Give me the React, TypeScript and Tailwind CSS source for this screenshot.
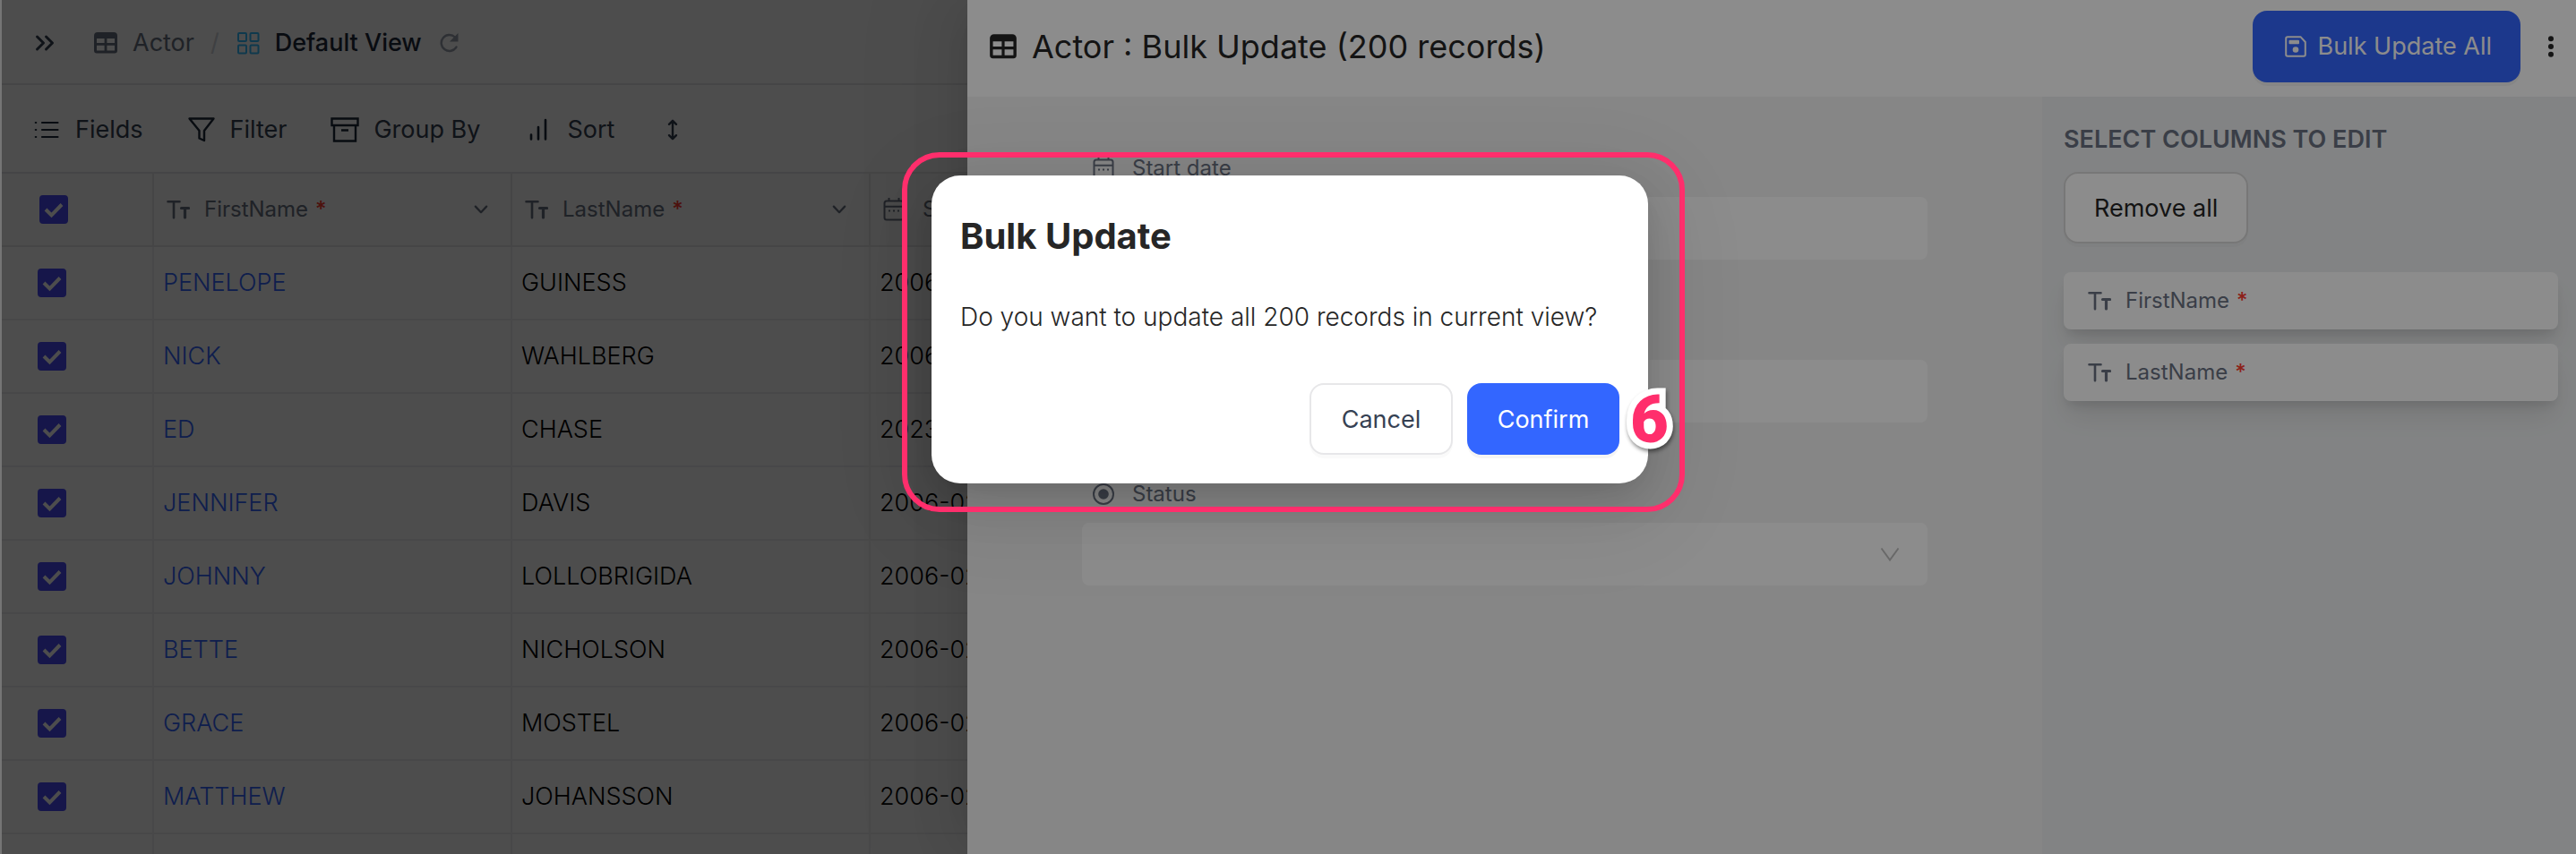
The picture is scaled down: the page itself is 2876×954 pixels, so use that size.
import type { ReactNode } from 'react';

type IconProps = { className?: string };

function TableIcon({ className }: IconProps) {
  return (
    <svg viewBox="0 0 28 28" className={className} fill="currentColor" aria-hidden="true">
      <path
        fillRule="evenodd"
        d="M5 2h18a4 4 0 0 1 4 4v16.500a3 3 0 0 1-3 3H4a3 3 0 0 1-3-3V6a4 4 0 0 1 4-4ZM4 9v5h8.600V9ZM15.400 9v5H24V9ZM4 16.800v5.700h8.600v-5.700ZM15.400 16.800v5.700H24v-5.700Z"
      />
    </svg>
  );
}

function TextTypeIcon({ className }: IconProps) {
  return (
    <svg viewBox="0 0 26 22" className={className} fill="none" stroke="currentColor" strokeLinecap="round" aria-hidden="true">
      <path d="M1.500 2.200H14.500M8 2.200V20.300" strokeWidth="2.600" />
      <path d="M16.500 9.500H24.500M20.500 9.500V20" strokeWidth="3.200" />
    </svg>
  );
}

function CalendarIcon({ className }: IconProps) {
  return (
    <svg viewBox="0 0 24 26" className={className} fill="none" stroke="currentColor" strokeWidth="2" aria-hidden="true">
      <rect x="1.500" y="3.500" width="21" height="21" rx="2.500" />
      <path d="M1.500 9.800h21M6.500 0v4M17.500 0v4" />
      <path d="M6 14.500h2M11 14.500h2M16 14.500h2" strokeWidth="2.200" />
    </svg>
  );
}

function ChevronIcon({ className }: IconProps) {
  return (
    <svg viewBox="0 0 16 16" className={className} fill="none" stroke="currentColor" strokeWidth="2" strokeLinecap="round" strokeLinejoin="round" aria-hidden="true">
      <path d="M2.500 5 8 10.800 13.500 5" />
    </svg>
  );
}

function Checkbox({ label }: { label: string }) {
  return (
    <label className="grid size-8 place-items-center">
      <input
        type="checkbox"
        defaultChecked
        aria-label={label}
        className="col-start-1 row-start-1 size-8 appearance-none rounded border-2 border-gray-300 checked:border-[#4b4bf8] checked:bg-[#4b4bf8]"
      />
      <svg viewBox="0 0 32 32" className="pointer-events-none col-start-1 row-start-1 size-8" fill="none" stroke="#ffffff" strokeWidth="4" aria-hidden="true">
        <path d="M7 16 13.500 22.500 25 10.500" />
      </svg>
    </label>
  );
}

function ToolButton({ icon, children }: { icon: ReactNode; children: ReactNode }) {
  return (
    <button type="button" className="flex items-center gap-4 whitespace-nowrap text-[27px] leading-9 text-gray-700">
      <span className="grid w-8 place-items-center text-gray-800">{icon}</span>
      {children}
    </button>
  );
}

function ColumnHeader({ name }: { name: string }) {
  return (
    <div className="flex items-center pr-6 pl-[14px]">
      <TextTypeIcon className="h-[22px] w-[26px]" />
      <span className="pl-4">{name}</span>
      <span className="pl-2 font-medium text-[#ff3b30]">*</span>
      <ChevronIcon className="ml-auto size-[18px]" />
    </div>
  );
}

const actors = [
  { first: 'PENELOPE', last: 'GUINESS', start: '2006-02-15' },
  { first: 'NICK', last: 'WAHLBERG', start: '2006-02-15' },
  { first: 'ED', last: 'CHASE', start: '2023-02-15' },
  { first: 'JENNIFER', last: 'DAVIS', start: '2006-02-15' },
  { first: 'JOHNNY', last: 'LOLLOBRIGIDA', start: '2006-02-15' },
  { first: 'BETTE', last: 'NICHOLSON', start: '2006-02-15' },
  { first: 'GRACE', last: 'MOSTEL', start: '2006-02-15' },
  { first: 'MATTHEW', last: 'JOHANSSON', start: '2006-02-15' },
];

function TopBar() {
  return (
    <header className="flex h-[95px] items-center border-b-2 border-[#e7e7e9] pt-[2px] pl-[34px] text-[27px] leading-9">
      <button type="button" aria-label="Expand sidebar" className="text-gray-700">
        <svg viewBox="0 0 28 28" className="size-7" fill="none" stroke="currentColor" strokeWidth="3" strokeLinecap="round" strokeLinejoin="round" aria-hidden="true">
          <path d="M5.500 7 12.500 14 5.500 21M15.500 7 22.500 14 15.500 21" />
        </svg>
      </button>
      <nav aria-label="Breadcrumb" className="flex items-center pl-10">
        <TableIcon className="size-7 text-gray-500" />
        <a href="#actor" className="pl-4 text-gray-500">Actor</a>
        <span className="px-[18px] text-gray-300">/</span>
        <svg viewBox="0 0 28 28" className="size-7" fill="none" stroke="#36bfff" strokeWidth="2" aria-hidden="true">
          <rect x="3" y="3" width="9" height="9" rx="1" />
          <rect x="16.500" y="3" width="9" height="9" rx="1" />
          <rect x="3" y="16.500" width="9" height="9" rx="1" />
          <rect x="16.500" y="16.500" width="9" height="9" rx="1" />
        </svg>
        <span className="pl-4 font-medium text-gray-800">Default View</span>
      </nav>
      <button type="button" aria-label="Reload" className="pl-4 text-gray-400">
        <svg viewBox="0 0 28 28" className="size-7" aria-hidden="true">
          <path d="M22.500 18.500A9 9 0 1 1 21 7.500" fill="none" stroke="currentColor" strokeWidth="2.400" strokeLinecap="round" />
          <path d="M24.500 3v9.500H15Z" fill="currentColor" />
        </svg>
      </button>
    </header>
  );
}

function Toolbar() {
  return (
    <div className="flex h-[99px] items-center gap-[49px] border-b-2 border-[#e7e7e9] pt-[2px] pl-[34px]">
      <ToolButton
        icon={
          <svg viewBox="0 0 28 24" className="h-6 w-7" fill="none" stroke="currentColor" strokeWidth="2.200" strokeLinecap="round" aria-hidden="true">
            <path d="M9 4h17.500M9 12h17.500M9 20h17.500M1.800 4h.4M1.800 12h.4M1.800 20h.4" />
          </svg>
        }
      >
        Fields
      </ToolButton>
      <ToolButton
        icon={
          <svg viewBox="0 0 32 32" className="size-8" fill="none" stroke="currentColor" strokeWidth="2.400" strokeLinejoin="round" aria-hidden="true">
            <path d="M2.500 3.500h27L19 17v11l-5.500-2.500V17Z" />
          </svg>
        }
      >
        Filter
      </ToolButton>
      <ToolButton
        icon={
          <svg viewBox="0 0 32 32" className="size-8" fill="none" stroke="currentColor" strokeWidth="2.400" aria-hidden="true">
            <path d="M1.500 3.500h29v7.500h-29ZM4 11v17.500h24V11M12 16.500h8" />
          </svg>
        }
      >
        Group By
      </ToolButton>
      <ToolButton
        icon={
          <svg viewBox="0 0 24 28" className="h-7 w-6" fill="none" stroke="currentColor" strokeWidth="2.600" strokeLinecap="round" aria-hidden="true">
            <path d="M4 19.500v5M12 11v13.500M20 3v21.500" />
          </svg>
        }
      >
        Sort
      </ToolButton>
      <button type="button" aria-label="Row height" className="grid w-8 place-items-center text-gray-700">
        <svg viewBox="0 0 16 24" className="h-6 w-4" fill="none" stroke="currentColor" strokeWidth="2.400" strokeLinecap="round" strokeLinejoin="round" aria-hidden="true">
          <path d="M8 2v20M4 5.800 8 1.800l4 4M4 18.200l4 4 4-4" />
        </svg>
      </button>
    </div>
  );
}

function Grid() {
  return (
    <table className="w-[1369px] table-fixed border-collapse text-left">
      <colgroup>
        <col className="w-[169px]" />
        <col className="w-[400px]" />
        <col className="w-[400px]" />
        <col className="w-[400px]" />
      </colgroup>
      <thead className="bg-[#fbfbfb] text-[24px] leading-8 text-gray-500">
        <tr className="h-[81px] border-b-2 border-[#e7e7e9] [&>th]:border-r-2 [&>th]:border-[#e7e7e9] [&>th]:p-0 [&>th]:font-normal">
          <th scope="col">
            <div className="pl-[42px]">
              <Checkbox label="Select all" />
            </div>
          </th>
          <th scope="col"><ColumnHeader name="FirstName" /></th>
          <th scope="col"><ColumnHeader name="LastName" /></th>
          <th scope="col">
            <div className="flex items-center pl-[14px]">
              <CalendarIcon className="h-[26px] w-6" />
              <span className="pl-5">Start date</span>
            </div>
          </th>
        </tr>
      </thead>
      <tbody className="text-[27px] leading-9 font-light text-black">
        {actors.map((a) => (
          <tr key={a.first} className="h-[82px] border-b-2 border-[#f1f1f2] [&>td]:border-r-2 [&>td]:border-[#f1f1f2] [&>td]:p-0">
            <td>
              <div className="pl-10">
                <Checkbox label={`Select ${a.first}`} />
              </div>
            </td>
            <td><a href="#record" className="pl-[10px] text-[#3366ff]">{a.first}</a></td>
            <td><span className="pl-[10px]">{a.last}</span></td>
            <td><span className="pl-[10px]">{a.start}</span></td>
          </tr>
        ))}
        <tr className="h-[82px] [&>td]:border-r-2 [&>td]:border-[#f1f1f2]">
          <td />
          <td />
          <td />
          <td />
        </tr>
      </tbody>
    </table>
  );
}

function ColumnCard({ name }: { name: string }) {
  return (
    <li className="flex h-16 items-center rounded-lg bg-white pl-[27px] text-[24px] leading-8 text-gray-500 shadow-[0_20px_30px_-6px_rgba(0,0,0,0.10),0_8px_12px_-4px_rgba(0,0,0,0.10)]">
      <TextTypeIcon className="h-[22px] w-[26px]" />
      <span className="pl-4">{name}</span>
      <span className="pl-2 font-medium text-[#ff3b30]">*</span>
    </li>
  );
}

function Drawer() {
  return (
    <aside
      aria-label="Bulk update form"
      className="absolute inset-y-0 right-0 flex w-[1796px] flex-col bg-[#f4f4f4] shadow-[-12px_0_32px_-16px_rgba(0,0,0,0.08),-18px_0_56px_rgba(0,0,0,0.05),-24px_0_96px_32px_rgba(0,0,0,0.03)]"
    >
      <header className="flex h-[108px] shrink-0 items-center bg-white pr-4 pb-1 pl-6">
        <TableIcon className="size-8 text-[#262626]" />
        <h1 className="pl-4 text-[36px] leading-[48px] text-[#262626]">Actor : Bulk Update (200 records)</h1>
        <button
          type="button"
          className="ml-auto flex h-20 items-center gap-3 rounded-2xl bg-[#3366ff] pr-8 pl-9 text-[27px] leading-9 text-white shadow-[0_4px_0_rgba(0,0,0,0.04)]"
        >
          <svg viewBox="0 0 24 24" className="size-6" aria-hidden="true">
            <path d="M3 1.200h14.500L22.800 7v14a1.800 1.800 0 0 1-1.800 1.800H3A1.800 1.800 0 0 1 1.200 21V3A1.800 1.800 0 0 1 3 1.200Z" fill="none" stroke="currentColor" strokeWidth="2" />
            <rect x="4.500" y="4.800" width="11.500" height="4.400" rx="1" fill="currentColor" />
            <circle cx="12" cy="15.500" r="3.300" fill="currentColor" />
          </svg>
          Bulk Update All
        </button>
        <button type="button" aria-label="More actions" className="ml-[22px] text-[#262626]">
          <svg viewBox="0 0 24 32" className="h-8 w-6" fill="currentColor" aria-hidden="true">
            <circle cx="12" cy="7.300" r="3" />
            <circle cx="12" cy="16" r="3" />
            <circle cx="12" cy="24.700" r="3" />
          </svg>
        </button>
      </header>
      <div className="flex min-h-0 flex-1">
        <form className="flex flex-1 flex-col gap-[68px] px-32 pt-[68px] text-[24px] leading-6 text-gray-500">
          <div className="flex flex-col gap-5">
            <label htmlFor="start-date" className="flex h-6 items-center gap-5 pl-3">
              <CalendarIcon className="h-[26px] w-6" />
              Start date
            </label>
            <input id="start-date" type="text" className="h-[70px] rounded-lg bg-white px-6" />
          </div>
          <div className="flex flex-col gap-5 pt-11">
            <input type="text" aria-label="End date" className="h-[70px] rounded-lg bg-white px-6" />
          </div>
          <div className="flex flex-col gap-5">
            <label htmlFor="status" className="flex h-6 items-center gap-5 pl-3">
              <svg viewBox="0 0 24 24" className="size-6" aria-hidden="true">
                <circle cx="12" cy="12" r="11" fill="none" stroke="currentColor" strokeWidth="2" />
                <circle cx="12" cy="12" r="5.800" fill="currentColor" />
              </svg>
              Status
            </label>
            <div className="grid items-center">
              <select id="status" className="col-start-1 row-start-1 h-[70px] appearance-none rounded-lg bg-white px-6">
                <option value="" />
              </select>
              <svg viewBox="0 0 24 24" className="pointer-events-none col-start-1 row-start-1 mr-[30px] size-6 justify-self-end" fill="none" stroke="#bfbfbf" strokeWidth="2" aria-hidden="true">
                <path d="M2.500 5.500 12 18.500 21.500 5.500" />
              </svg>
            </div>
          </div>
        </form>
        <section className="w-[596px] bg-[#edeff0] pt-7 pr-5 pl-6">
          <h2 className="text-[27px] leading-10 font-semibold text-gray-500">SELECT COLUMNS TO EDIT</h2>
          <button
            type="button"
            className="mt-4 h-20 rounded-2xl border-2 border-[#d9d9d9] bg-white px-8 pt-[2px] text-[27px] leading-9 text-[#262626] shadow-[0_4px_0_rgba(0,0,0,0.02)]"
          >
            Remove all
          </button>
          <ul className="mt-8 flex flex-col gap-4">
            <ColumnCard name="FirstName" />
            <ColumnCard name="LastName" />
          </ul>
        </section>
      </div>
    </aside>
  );
}

function ConfirmModal() {
  return (
    <div className="absolute inset-0 flex items-start justify-center bg-black/45 pt-[196px] pl-[2px]">
      <div role="dialog" aria-labelledby="confirm-title" className="relative w-[800px] rounded-[32px] bg-white px-8 pt-10 pb-8 shadow-[0_12px_32px_-16px_rgba(0,0,0,0.12),0_18px_56px_rgba(0,0,0,0.12),0_24px_96px_32px_rgba(0,0,0,0.06)]">
        <h2 id="confirm-title" className="text-[40px] leading-[56px] font-bold text-[#262626]">Bulk Update</h2>
        <p className="mt-10 text-[28px] leading-[44px] font-light whitespace-nowrap text-[#262626]">
          Do you want to update all 200 records in current view?
        </p>
        <div className="mt-[52px] flex justify-end gap-4 text-[27px] leading-9">
          <button type="button" className="h-20 w-40 rounded-2xl border-2 border-[#e7e7e9] bg-white pt-[2px] text-gray-700 shadow-[0_4px_0_rgba(0,0,0,0.02)]">
            Cancel
          </button>
          <button type="button" className="h-20 w-[170px] rounded-2xl bg-[#3366ff] pt-[2px] text-white shadow-[0_4px_0_rgba(0,0,0,0.04)]">
            Confirm
          </button>
        </div>
        <div className="pointer-events-none absolute -top-[26px] -right-[41px] -bottom-8 -left-[33px] rounded-[42px] border-[6px] border-[#ff2e6c]" />
        <span className="absolute top-[236px] left-[780px] font-[Roboto,sans-serif] text-[74px] leading-none font-black text-[#ff2e6c] drop-shadow-[1px_3px_2px_rgba(0,0,0,0.45)] [-webkit-text-stroke:14px_white] [paint-order:stroke_fill]">
          6
        </span>
      </div>
    </div>
  );
}

export default function App() {
  return (
    <div className="flex h-screen overflow-hidden bg-[#757575] pl-[2px] font-[Inter,sans-serif]">
      <main className="relative min-w-0 flex-1 overflow-hidden bg-white">
        <TopBar />
        <Toolbar />
        <Grid />
        <div className="absolute inset-0 bg-black/45" />
        <Drawer />
        <ConfirmModal />
      </main>
    </div>
  );
}
